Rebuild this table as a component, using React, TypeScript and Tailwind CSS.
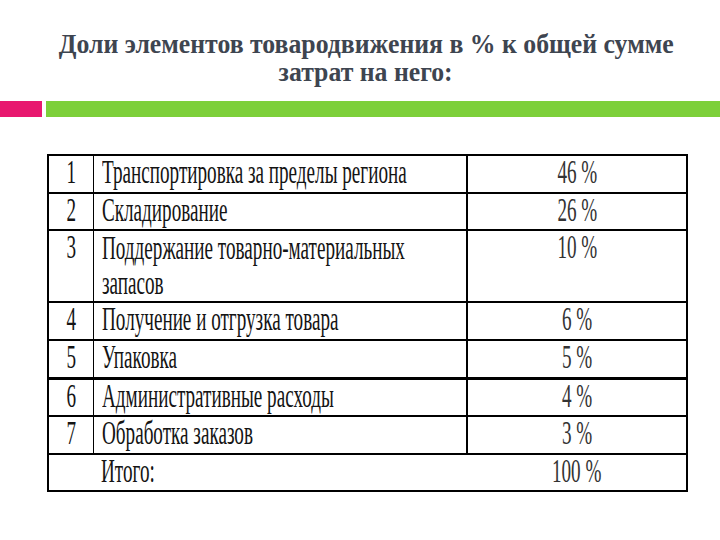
import React from "react";

const serif = { fontFamily: '"Liberation Serif", "DejaVu Serif", serif' };

type Row = { n: string; name: React.ReactNode; pct: string; h: string; b: string; lead?: string };

const rows: Row[] = [
  { n: "1", name: "Транспортировка за пределы региона", pct: "46 %", h: "h-[38px]", b: "border-b-2" },
  { n: "2", name: "Складирование", pct: "26 %", h: "h-[37px]", b: "border-b-2" },
  {
    n: "3",
    name: (
      <>
        Поддержание товарно-материальных
        <br />
        запасов
      </>
    ),
    pct: "10 %",
    h: "h-[71px]",
    b: "border-b-2",
    lead: "leading-[35px]",
  },
  { n: "4", name: "Получение и отгрузка товара", pct: "6 %", h: "h-[38px]", b: "border-b-2" },
  { n: "5", name: "Упаковка", pct: "5 %", h: "h-[38px]", b: "border-b-[3px]" },
  { n: "6", name: "Административные расходы", pct: "4 %", h: "h-[38px]", b: "border-b-2" },
  { n: "7", name: "Обработка заказов", pct: "3 %", h: "h-[38px]", b: "border-b-2" },
];

function Sq({ children, center }: { children: React.ReactNode; center?: boolean }) {
  return (
    <span
      className={
        "inline-block whitespace-nowrap scale-x-[0.58] " + (center ? "origin-center" : "origin-left")
      }
    >
      {children}
    </span>
  );
}

export default function App() {
  return (
    <div className="w-[720px] h-[540px] bg-white overflow-hidden relative" style={serif}>
      <div className="pt-[30px] pl-[12px] flex flex-col items-center text-[#3e4550] font-bold text-[28px] leading-[28px]">
        <span className="inline-block whitespace-nowrap scale-x-[0.92] origin-center">
          Доли элементов товародвижения в % к общей сумме
        </span>
        <span className="inline-block whitespace-nowrap scale-x-[0.92] origin-center">
          затрат на него:
        </span>
      </div>
      <div className="mt-[15px] flex gap-[4px] h-[16px]">
        <div className="w-[42px] bg-[#e8186f]" />
        <div className="flex-1 bg-[#7dd03a]" />
      </div>
      <div className="mt-[37px] ml-[47px] w-[639px]">
        <table className="w-full table-fixed border-collapse border-2 border-black text-[33px] leading-[33px] text-[#141414]">
          <colgroup>
            <col className="w-[45px]" />
            <col className="w-[374px]" />
            <col className="w-[220px]" />
          </colgroup>
          <tbody>
            {rows.map((r) => (
              <tr key={r.n} className={r.h + " " + r.b + " border-black"}>
                <td className="align-top text-center border-r border-black p-0">
                  <Sq center>{r.n}</Sq>
                </td>
                <td className={"align-top border-r-2 border-black p-0 pl-[8px] " + (r.lead ?? "")}>
                  <Sq>{r.name}</Sq>
                </td>
                <td className="align-top text-center p-0 text-[#333]">
                  <Sq center>{r.pct}</Sq>
                </td>
              </tr>
            ))}
            <tr className="h-[37px]">
              <td className="p-0" />
              <td className="align-top p-0 pl-[8px]">
                <Sq>Итого:</Sq>
              </td>
              <td className="align-top text-center p-0 text-[#333]">
                <Sq center>100 %</Sq>
              </td>
            </tr>
          </tbody>
        </table>
      </div>
    </div>
  );
}
